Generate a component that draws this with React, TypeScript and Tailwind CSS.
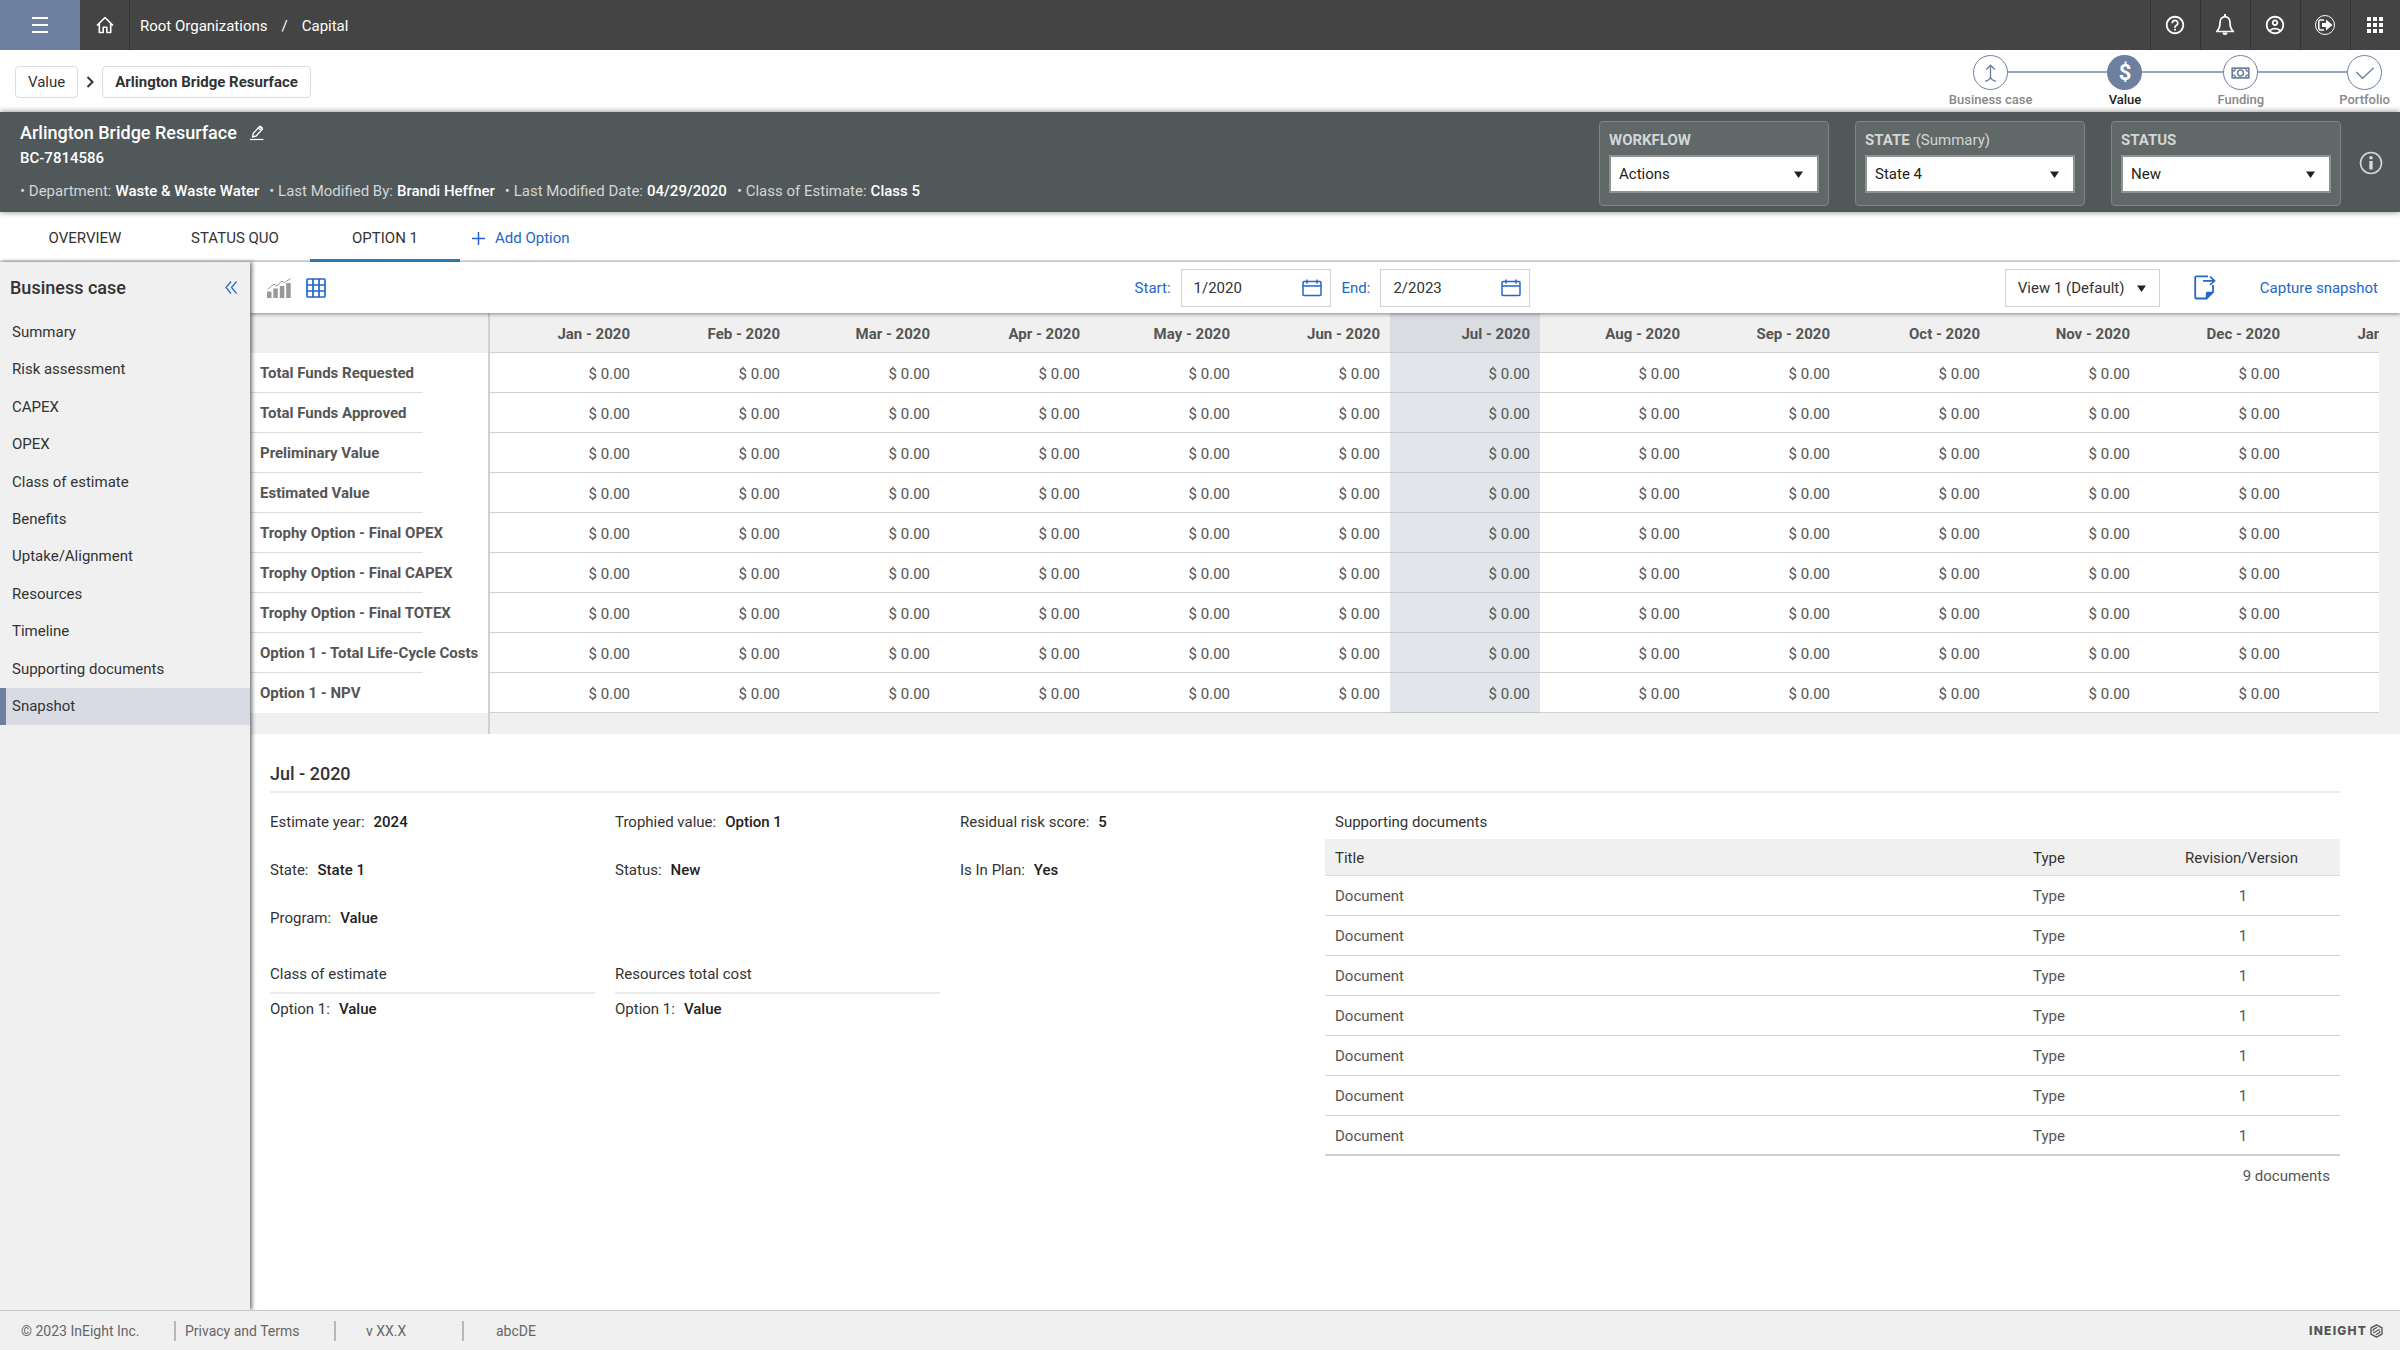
import React from "react";
import { MdApps, MdHelpOutline, MdOutlineAccountCircle } from "react-icons/md";

const months = ["Jan", "Feb", "Mar", "Apr", "May", "Jun", "Jul", "Aug", "Sep", "Oct", "Nov", "Dec"]
  .map((m) => `${m} - 2020`)
  .concat("Jan - 2021");
const selectedMonth = "Jul - 2020";

const measures = [
  "Total Funds Requested",
  "Total Funds Approved",
  "Preliminary Value",
  "Estimated Value",
  "Trophy Option - Final OPEX",
  "Trophy Option - Final CAPEX",
  "Trophy Option - Final TOTEX",
  "Option 1 - Total Life-Cycle Costs",
  "Option 1 - NPV",
];

const sections = [
  "Summary",
  "Risk assessment",
  "CAPEX",
  "OPEX",
  "Class of estimate",
  "Benefits",
  "Uptake/Alignment",
  "Resources",
  "Timeline",
  "Supporting documents",
  "Snapshot",
];

const documents = Array.from({ length: 7 }, () => ({ title: "Document", type: "Type", revision: "1" }));

function Caret() {
  return (
    <svg width="9" height="7" viewBox="0 0 9 7" fill="#222" aria-hidden="true">
      <path d="M0 .5h9L4.500 7z" />
    </svg>
  );
}

function HomeIcon() {
  return (
    <svg width="18" height="18" viewBox="0 0 18 18" fill="none" stroke="#fff" strokeWidth="1.600" aria-hidden="true">
      <path d="M1 9.500 9 1.500l8 8M3.300 7.800v8.700h3.900v-5.200h3.600v5.200h3.900V7.800" strokeLinejoin="round" />
    </svg>
  );
}

function BellIcon() {
  return (
    <svg width="20" height="22" viewBox="0 0 20 22" fill="none" stroke="#fff" aria-hidden="true">
      <path
        d="M10 2.500c-3.300.6-5 3-5 6.300 0 4.500-1 6.700-3.300 8.700h16.600C16 15.500 15 13.300 15 8.800c0-3.300-1.700-5.700-5-6.300z"
        strokeWidth="1.700"
        strokeLinejoin="round"
      />
      <path d="M10 .8v1.700" strokeWidth="2" strokeLinecap="round" />
      <path d="M7.500 18.500a2.500 2.500 0 0 0 5 0z" fill="#fff" stroke="none" />
    </svg>
  );
}

function SignOutIcon() {
  return (
    <svg width="22" height="22" viewBox="0 0 22 22" fill="none" stroke="#fff" aria-hidden="true">
      <circle cx="11" cy="11" r="9.500" strokeWidth="1" />
      <path d="M10 6H6.300C5.300 6 4.800 6.500 4.800 7.500v7c0 1 .5 1.500 1.500 1.500H10" strokeWidth="1.500" />
      <path d="M8 9h4V5.500L18.500 11 12 16.500V13H8z" fill="#fff" stroke="none" />
    </svg>
  );
}

function PencilIcon() {
  return (
    <svg width="14" height="16" viewBox="0 0 14 16" fill="none" stroke="#fff" aria-hidden="true">
      <path d="M2.500 12l.7-3.500 6.300-7 3 2.500-6.400 7zM8.300 3l3 2.500" strokeWidth="1.300" strokeLinejoin="round" />
      <path d="M9.300 1l1-.6 2.500 2.200-.6 1.400z" fill="#fff" stroke="none" />
      <path d="M0 14.500h13.500" strokeWidth="1.200" />
    </svg>
  );
}

function InfoIcon() {
  return (
    <svg width="24" height="24" viewBox="0 0 24 24" fill="none" aria-hidden="true">
      <circle cx="12" cy="12" r="10.500" stroke="#d5d8d8" strokeWidth="1.600" />
      <circle cx="12" cy="6.800" r="1.800" fill="#d5d8d8" />
      <path d="M10.300 10h3.400v8.500h-3.400z" fill="#d5d8d8" />
    </svg>
  );
}

function ChartIcon() {
  return (
    <svg width="24" height="20" viewBox="0 0 24 20" fill="#999" aria-hidden="true">
      <path d="M0 13.500h4.500V20H0zM6.300 10.500h4.500V20H6.300zM12.800 8h4.500v12h-4.500zM19.200 5h4.500v15h-4.500z" />
      <path d="M.5 11.500 7 6l3 2 4.500-5 3 1.500L23.500.5" fill="none" stroke="#999" />
    </svg>
  );
}

function GridIcon() {
  return (
    <svg width="20" height="20" viewBox="0 0 20 20" fill="none" stroke="#2466cc" strokeWidth="1.700" aria-hidden="true">
      <rect x="1" y="1" width="18" height="18" rx="1" />
      <path d="M7 1v18M13 1v18M1 7h18M1 13h18" />
    </svg>
  );
}

function CalendarIcon() {
  return (
    <svg width="20" height="18" viewBox="0 0 20 18" fill="none" stroke="#2466cc" strokeWidth="1.500" aria-hidden="true">
      <rect x="1" y="2.500" width="18" height="14" rx="1" />
      <path d="M1 7h18M5 .5v4M15 .5v4" />
    </svg>
  );
}

function ExportIcon() {
  return (
    <svg width="22" height="25" viewBox="0 0 22 25" fill="none" stroke="#2466cc" strokeWidth="1.800" aria-hidden="true">
      <path d="M14 1.300H2.500c-.8 0-1.300.5-1.300 1.300v19.600c0 .8.500 1.300 1.300 1.300h10l6.500-6.500V10" strokeLinejoin="round" />
      <path d="M9 5.800h11M16 1.500l4.500 4.300L16 10" strokeWidth="1.700" />
      <path d="M11.800 24v-5c0-1.600.6-2.200 2.200-2.200h5.500z" fill="#2466cc" stroke="none" />
    </svg>
  );
}

function HexLogo() {
  return (
    <svg width="13" height="14" viewBox="0 0 13 14" fill="none" stroke="#555" aria-hidden="true">
      <path d="M6.500.8 12 3.900v6.200l-5.500 3.100L1 10.100V3.900z" strokeWidth="1.400" strokeLinejoin="round" />
      <path d="M3.300 7.200V5.400L7.200 3.200M3.300 9 9.700 5.200M5.800 10.800l3.900-2.200V6.800" strokeWidth="1.200" />
    </svg>
  );
}

const steps = [
  {
    name: "Business case",
    icon: <path d="M17 22V10M12.500 14 17 9.500l4.500 4.500M17 21c0 2.500-2 4-5.500 5M17 21c0 2.500 2 4 5.500 5" />,
  },
  { name: "Value", icon: null },
  {
    name: "Funding",
    icon: (
      <>
        <rect x="8.500" y="12.500" width="17" height="10" strokeWidth="1.800" />
        <circle cx="17" cy="17.500" r="3" strokeWidth="1.600" />
        <path d="M9 15.500c1.500 0 2.700-1 2.700-2.500M25 15.500c-1.500 0-2.700-1-2.700-2.500M9 19.500c1.500 0 2.700 1 2.700 2.500M25 19.500c-1.500 0-2.700 1-2.700 2.500" />
      </>
    ),
  },
  { name: "Portfolio", icon: <path d="m8.500 16.500 6.500 6.500L26.500 12" /> },
];

function Stepper() {
  return (
    <ol className="relative flex gap-[75px] pr-[10px] pt-[5px]">
      <li aria-hidden="true" className="absolute left-10 right-9 top-[21px] h-0.5 bg-[#93a5c2]" />
      {steps.map((step) => {
        const active = step.name === "Value";
        return (
          <li key={step.name} className="relative flex flex-col items-center">
            <span
              className={
                active
                  ? "flex size-[35px] items-center justify-center rounded-full bg-[#6e80a0] text-[22px] font-bold text-white"
                  : "flex size-[35px] items-center justify-center rounded-full border border-[#6e80a0] bg-white"
              }
            >
              {active ? (
                "$"
              ) : (
                <svg width="34" height="34" viewBox="0 0 34 35" fill="none" stroke="#6e80a0" strokeWidth="1.400" aria-hidden="true">
                  {step.icon}
                </svg>
              )}
            </span>
            <span className={active ? "text-[13px] font-medium leading-5 text-[#222]" : "text-[13px] font-medium leading-5 text-[#888]"}>
              {step.name}
            </span>
          </li>
        );
      })}
    </ol>
  );
}

function StateCard({ id, label, note, value }: { id: string; label: string; note?: string; value: string }) {
  return (
    <div className="w-[230px] rounded-sm border border-[#7d8686] bg-[#606868] px-[9px] pb-3 pt-2">
      <label htmlFor={id} className="block text-[15px] font-bold leading-5 text-[#d3d6d6]">
        {label}
        {note && <span className="ml-1.5 font-normal">{note}</span>}
      </label>
      <div className="relative mt-[5px]">
        <select
          id={id}
          className="block h-[38px] w-full appearance-none border-2 border-[#8b9393] bg-white px-2 text-[15px] text-[#222]"
        >
          <option>{value}</option>
        </select>
        <span className="pointer-events-none absolute right-4 top-4">
          <Caret />
        </span>
      </div>
    </div>
  );
}

function DateField({ id, label, value }: { id: string; label: string; value: string }) {
  return (
    <div className="flex items-center gap-2.5">
      <label htmlFor={id} className="text-[#2466cc]">
        {label}
      </label>
      <div className="flex h-[38px] w-[150px] items-center border border-[#d0d0d0] bg-white pr-2">
        <input id={id} type="text" defaultValue={value} className="w-full min-w-0 pl-3 text-[#333]" />
        <button type="button" aria-label={`Pick ${label}`}>
          <CalendarIcon />
        </button>
      </div>
    </div>
  );
}

function Fact({ name, value }: { name: string; value: string }) {
  return (
    <div className="flex gap-[9px]">
      <dt>{name}</dt>
      <dd className="font-medium text-[#222]">{value}</dd>
    </div>
  );
}

function HeaderFact({ name, value }: { name: string; value: string }) {
  return (
    <div className="flex gap-1">
      <dt className="text-[#d3d6d6]">• {name}</dt>
      <dd className="font-medium">{value}</dd>
    </div>
  );
}

export default function App() {
  return (
    <div className="flex min-h-screen flex-col bg-white font-[Roboto,sans-serif] text-[15px] leading-5 text-[#333]">
      <header className="flex h-[50px] bg-[#444] text-white">
        <button type="button" aria-label="Menu" className="flex w-20 items-center justify-center bg-[#6e80a0]">
          <svg width="16" height="16" viewBox="0 0 16 16" stroke="#fff" strokeWidth="1.800" aria-hidden="true">
            <path d="M0 1h16M0 8h16M0 15h16" />
          </svg>
        </button>
        <a href="#home" aria-label="Home" className="flex w-[50px] items-center justify-center border-r border-[#333]">
          <HomeIcon />
        </a>
        <nav aria-label="Organization" className="flex flex-1 items-center gap-[14px] pl-[10px] pt-px">
          <a href="#root">Root Organizations</a>
          <span>/</span>
          <a href="#capital">Capital</a>
        </nav>
        <button type="button" aria-label="Help" className="flex w-[50px] items-center justify-center border-l border-[#333] pr-px">
          <MdHelpOutline size={22} />
        </button>
        <button type="button" aria-label="Notifications" className="flex w-[50px] items-center justify-center border-l border-[#333] pr-px">
          <BellIcon />
        </button>
        <button type="button" aria-label="Account" className="flex w-[50px] items-center justify-center border-l border-[#333] pr-px">
          <MdOutlineAccountCircle size={22} />
        </button>
        <button type="button" aria-label="Sign out" className="flex w-[50px] items-center justify-center border-l border-[#333] pr-px">
          <SignOutIcon />
        </button>
        <button type="button" aria-label="Apps" className="flex w-[50px] items-center justify-center border-l border-[#333] pr-px">
          <MdApps size={24} />
        </button>
      </header>

      <div className="flex h-[62px] justify-between">
        <nav aria-label="Breadcrumb" className="flex items-center gap-2 pl-[15px] pt-px">
          <a href="#value" className="rounded-sm border border-[#dcdcdc] px-3 py-[5px]">
            Value
          </a>
          <svg width="8" height="12" viewBox="0 0 8 12" fill="none" stroke="#333" strokeWidth="2" aria-hidden="true">
            <path d="m1.500 1 5 5-5 5" />
          </svg>
          <a href="#project" className="rounded-sm border border-[#dcdcdc] px-3 py-[5px] font-bold">
            Arlington Bridge Resurface
          </a>
        </nav>
        <Stepper />
      </div>

      <section className="relative z-20 flex h-[100px] justify-between bg-[#505859] pl-5 text-white shadow-[0_0_6px_rgba(0,0,0,0.5)]">
        <div className="flex flex-col pt-[9px]">
          <div className="flex items-center gap-[13px]">
            <h1 className="text-[18px] font-medium leading-6">Arlington Bridge Resurface</h1>
            <button type="button" aria-label="Edit name">
              <PencilIcon />
            </button>
          </div>
          <p className="mt-[3px] font-medium">BC-7814586</p>
          <dl className="mt-[13px] flex gap-2.5">
            <HeaderFact name="Department:" value="Waste & Waste Water" />
            <HeaderFact name="Last Modified By:" value="Brandi Heffner" />
            <HeaderFact name="Last Modified Date:" value="04/29/2020" />
            <HeaderFact name="Class of Estimate:" value="Class 5" />
          </dl>
        </div>
        <div className="flex items-center gap-[26px] pr-[17px] pt-0.5">
          <StateCard id="workflow" label="WORKFLOW" value="Actions" />
          <StateCard id="state" label="STATE" note="(Summary)" value="State 4" />
          <StateCard id="status" label="STATUS" value="New" />
          <button type="button" aria-label="Information" className="-ml-2">
            <InfoIcon />
          </button>
        </div>
      </section>

      <nav aria-label="Options" className="flex h-[50px] border-b-2 border-[#e0e0e0] pl-[10px]">
        <a href="#overview" className="flex w-[150px] items-center justify-center pt-1">
          OVERVIEW
        </a>
        <a href="#statusquo" className="flex w-[150px] items-center justify-center pt-1">
          STATUS QUO
        </a>
        <a
          href="#option1"
          aria-current="page"
          className="-mb-0.5 flex w-[150px] items-center justify-center border-b-[3px] border-[#2f80bd] pt-[5px]"
        >
          OPTION 1
        </a>
        <button type="button" className="flex items-center gap-2.5 pl-3 pt-1 text-[#2466cc]">
          <svg width="13" height="13" viewBox="0 0 13 13" stroke="#2466cc" strokeWidth="1.500" aria-hidden="true">
            <path d="M6.500 0v13M0 6.500h13" />
          </svg>
          Add Option
        </button>
      </nav>

      <div className="flex flex-1">
        <aside className="relative z-10 w-[250px] shrink-0 bg-[#f0f0f0] shadow-[2px_0_4px_rgba(0,0,0,0.55)]">
          <div className="flex h-[51px] items-center justify-between pl-[10px] pr-[13px]">
            <h2 className="text-[18px] font-medium">Business case</h2>
            <button type="button" aria-label="Collapse">
              <svg width="12" height="13" viewBox="0 0 12 13" fill="none" stroke="#2466cc" strokeWidth="1.200" aria-hidden="true">
                <path d="M6 .5l-5 6 5 6M11.500.5l-5 6 5 6" />
              </svg>
            </button>
          </div>
          <ul className="flex h-[412px] flex-col">
            {sections.map((s) => (
              <li key={s} className="flex flex-1">
                <a
                  href="#section"
                  className={
                    s === "Snapshot"
                      ? "flex flex-1 items-center border-l-[6px] border-[#6e80a0] bg-[#d8dbe3] pl-1.5"
                      : "flex flex-1 items-center pl-3"
                  }
                >
                  {s}
                </a>
              </li>
            ))}
          </ul>
        </aside>

        <main className="min-w-0 flex-1">
          <div className="relative flex h-[51px] items-center justify-between pl-[17px] pr-[22px] shadow-[0_1px_4px_rgba(0,0,0,0.45)]">
            <div className="flex flex-1 items-center gap-[15px]">
              <button type="button" aria-label="Chart view">
                <ChartIcon />
              </button>
              <button type="button" aria-label="Table view">
                <GridIcon />
              </button>
            </div>
            <div className="ml-5 flex gap-[11px]">
              <DateField id="start" label="Start:" value="1/2020" />
              <DateField id="end" label="End:" value="2/2023" />
            </div>
            <div className="flex flex-1 items-center justify-end">
              <div className="relative">
                <select
                  aria-label="View"
                  className="block h-[38px] w-[155px] appearance-none border border-[#d0d0d0] bg-white px-3 text-[#333]"
                >
                  <option>View 1 (Default)</option>
                </select>
                <span className="pointer-events-none absolute right-3.5 top-4">
                  <Caret />
                </span>
              </div>
              <button type="button" aria-label="Export" className="ml-[34px]">
                <ExportIcon />
              </button>
              <button type="button" className="ml-11 text-[#2466cc]">
                Capture snapshot
              </button>
            </div>
          </div>

          <div className="bg-[#f0f0f0] pr-[21px]">
            <div className="overflow-x-auto [scrollbar-width:none]">
              <table className="w-[2190px] table-fixed border-separate border-spacing-0 text-[#555]">
                <colgroup>
                  <col className="w-[240px]" />
                  {months.map((m) => (
                    <col key={m} className="w-[150px]" />
                  ))}
                </colgroup>
                <thead>
                  <tr className="h-10">
                    <td className="border-r-2 border-[#d0d0d0]" />
                    {months.map((m) => (
                      <th
                        key={m}
                        scope="col"
                        className={
                          m === selectedMonth
                            ? "border-b border-[#c3c6cb] bg-[#d9dce1] pr-[10px] pt-[3px] text-right font-bold"
                            : "border-b border-[#d0d0d0] pr-[10px] pt-[3px] text-right font-bold"
                        }
                      >
                        {m}
                      </th>
                    ))}
                  </tr>
                </thead>
                <tbody>
                  {measures.map((name, i) => (
                    <tr key={name} className="h-10 bg-white">
                      <th scope="row" className="border-r-2 border-[#d0d0d0] p-0 text-left font-bold">
                        <div className="h-[39px] whitespace-nowrap pl-[10px] leading-[41px]">{name}</div>
                        <div className={i < measures.length - 1 ? "h-px w-[173px] bg-[#ddd]" : "h-px"} />
                      </th>
                      {months.map((m) => (
                        <td
                          key={m}
                          className={
                            m === selectedMonth
                              ? "border-b border-[#c3c6cb] bg-[#e2e5ea] pr-[10px] pt-[3px] text-right"
                              : "border-b border-[#d0d0d0] pr-[10px] pt-[3px] text-right"
                          }
                        >
                          $ 0.00
                        </td>
                      ))}
                    </tr>
                  ))}
                </tbody>
              </table>
              <div className="h-[21px] w-[240px] border-r-2 border-[#d0d0d0]" />
            </div>
          </div>

          <section className="pl-5 pr-[60px] pt-[30px]">
            <h2 className="border-b-2 border-[#ebebeb] pb-[7px] text-[18px] font-medium">Jul - 2020</h2>
            <div className="mt-[19px] flex items-start justify-between">
              <div className="grid w-[1015px] grid-cols-3 gap-x-5">
                <dl className="col-span-3 grid grid-cols-3 gap-x-5 gap-y-7">
                  <Fact name="Estimate year:" value="2024" />
                  <Fact name="Trophied value:" value="Option 1" />
                  <Fact name="Residual risk score:" value="5" />
                  <Fact name="State:" value="State 1" />
                  <Fact name="Status:" value="New" />
                  <Fact name="Is In Plan:" value="Yes" />
                  <Fact name="Program:" value="Value" />
                </dl>
                <div className="mt-9">
                  <h3 className="border-b-2 border-[#ebebeb] pb-2">Class of estimate</h3>
                  <dl className="mt-[5px]">
                    <Fact name="Option 1:" value="Value" />
                  </dl>
                </div>
                <div className="mt-9">
                  <h3 className="border-b-2 border-[#ebebeb] pb-2">Resources total cost</h3>
                  <dl className="mt-[5px]">
                    <Fact name="Option 1:" value="Value" />
                  </dl>
                </div>
              </div>

              <div className="w-[1015px]">
                <h3 className="pl-[10px]">Supporting documents</h3>
                <table className="mt-[7px] w-full table-fixed border-separate border-spacing-0">
                  <colgroup>
                    <col />
                    <col className="w-[194px]" />
                    <col className="w-[194px]" />
                  </colgroup>
                  <thead>
                    <tr className="h-[37px] bg-[#f0f0f0]">
                      <th scope="col" className="border-b border-[#ddd] pl-[10px] pt-0.5 text-left font-normal">
                        Title
                      </th>
                      <th scope="col" className="border-b border-[#ddd] pt-0.5 font-normal">
                        Type
                      </th>
                      <th scope="col" className="border-b border-[#ddd] pr-[3px] pt-0.5 font-normal">
                        Revision/Version
                      </th>
                    </tr>
                  </thead>
                  <tbody className="text-center text-[#555] [&>tr:last-child>td]:border-b-2">
                    {documents.map((d, i) => (
                      <tr key={i} className="h-10">
                        <td className="border-b border-[#d0d0d0] pl-[10px] pt-px text-left">{d.title}</td>
                        <td className="border-b border-[#d0d0d0] pt-px">{d.type}</td>
                        <td className="border-b border-[#d0d0d0] pt-px">{d.revision}</td>
                      </tr>
                    ))}
                  </tbody>
                </table>
                <p className="mt-2.5 pr-[10px] text-right text-[#555]">9 documents</p>
              </div>
            </div>
          </section>
        </main>
      </div>

      <footer className="relative z-20 flex h-10 items-center border-t border-[#c8c8c8] bg-[#f0f0f0] pl-[21px] pr-[17px] text-[14px] text-[#666]">
        <span className="w-[153px]">© 2023 InEight Inc.</span>
        <a href="#privacy" className="w-[160px] border-l-2 border-[#b8b8b8] pl-[9px]">
          Privacy and Terms
        </a>
        <span className="w-[128px] border-l-2 border-[#b8b8b8] pl-[30px]">v XX.X</span>
        <span className="border-l-2 border-[#b8b8b8] pl-8">abcDE</span>
        <span className="ml-auto flex items-center gap-[3px] font-[Inter,sans-serif] text-[12px] font-extrabold tracking-widest text-[#555]">
          INEIGHT
          <HexLogo />
        </span>
      </footer>
    </div>
  );
}
